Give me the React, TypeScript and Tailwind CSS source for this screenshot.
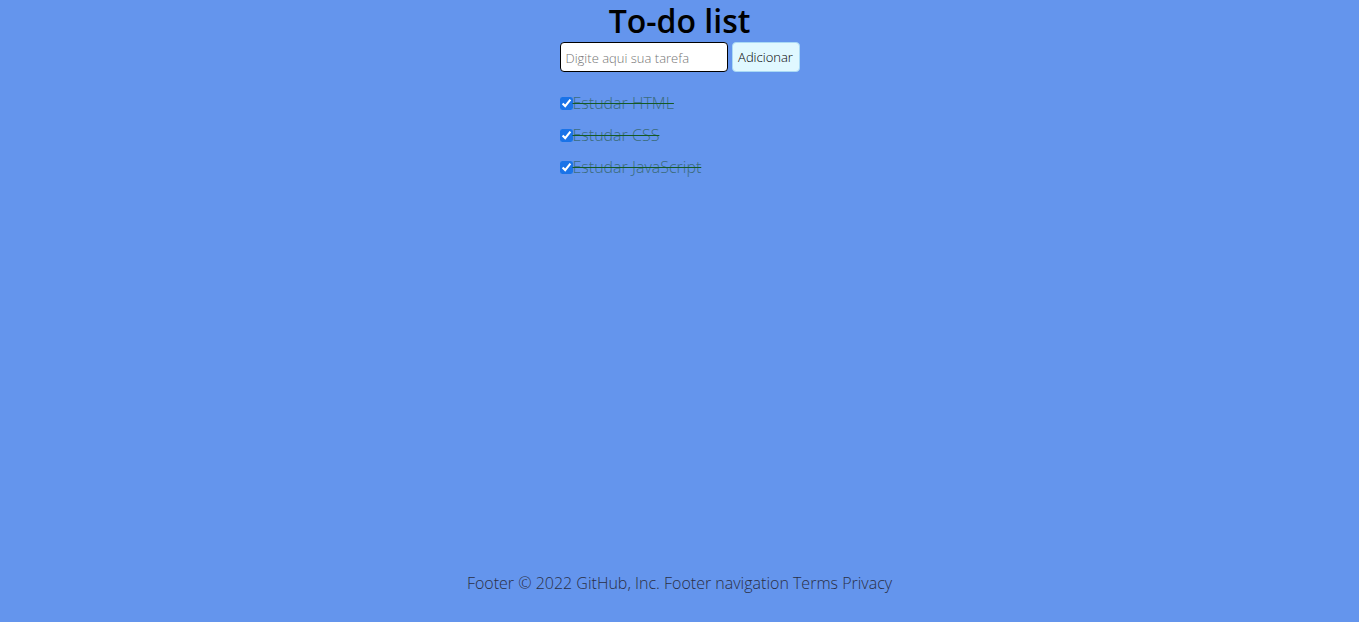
import { useState } from 'react';

const initial = ['Estudar HTML', 'Estudar CSS', 'Estudar JavaScript'];

export default function App() {
  const [tasks, setTasks] = useState(initial.map((t) => ({ text: t, done: true })));
  const [value, setValue] = useState('');

  const add = () => {
    if (!value.trim()) return;
    setTasks([...tasks, { text: value, done: false }]);
    setValue('');
  };

  return (
    <div className="h-screen flex flex-col bg-[#6495ed] font-['Open_Sans',sans-serif]">
      <main className="flex flex-col items-center">
        <h1 className="text-[32px] font-semibold leading-[42px] text-black">To-do list</h1>
        <div>
          <div className="flex gap-[4px]">
            <input
              value={value}
              onChange={(e) => setValue(e.target.value)}
              placeholder="Digite aqui sua tarefa"
              className="w-[168px] h-[30px] px-[5px] pt-[1px] bg-white border border-black rounded-[4px] text-[13px] font-light outline-none placeholder:text-[#757575]"
            />
            <button
              onClick={add}
              className="w-[68px] h-[30px] pt-[1px] bg-[#e0f8ff] border border-[#a9d9f5] rounded-[4px] text-[13px] font-light text-black"
            >
              Adicionar
            </button>
          </div>
          {/* lista */}
          <ul className="mt-[20px] flex flex-col gap-[10px]">
            {tasks.map((t, i) => (
              <li key={i} className="flex items-center h-[22px]">
                <input
                  type="checkbox"
                  checked={t.done}
                  onChange={() =>
                    setTasks(tasks.map((x, j) => (j === i ? { ...x, done: !x.done } : x)))
                  }
                  className="w-[13px] h-[13px] m-0 accent-[#1a73e8]"
                />
                <span
                  className={`text-[16px] font-light ${
                    t.done ? 'line-through decoration-[#145a24] text-[#3b6c7c]' : 'text-black'
                  }`}
                >
                  {t.text}
                </span>
              </li>
            ))}
          </ul>
        </div>
      </main>
      <footer className="mt-auto pb-[27px] text-center text-[16px] font-light text-[#2a2f45]">
        Footer © 2022 GitHub, Inc. Footer navigation Terms Privacy
      </footer>
    </div>
  );
}
